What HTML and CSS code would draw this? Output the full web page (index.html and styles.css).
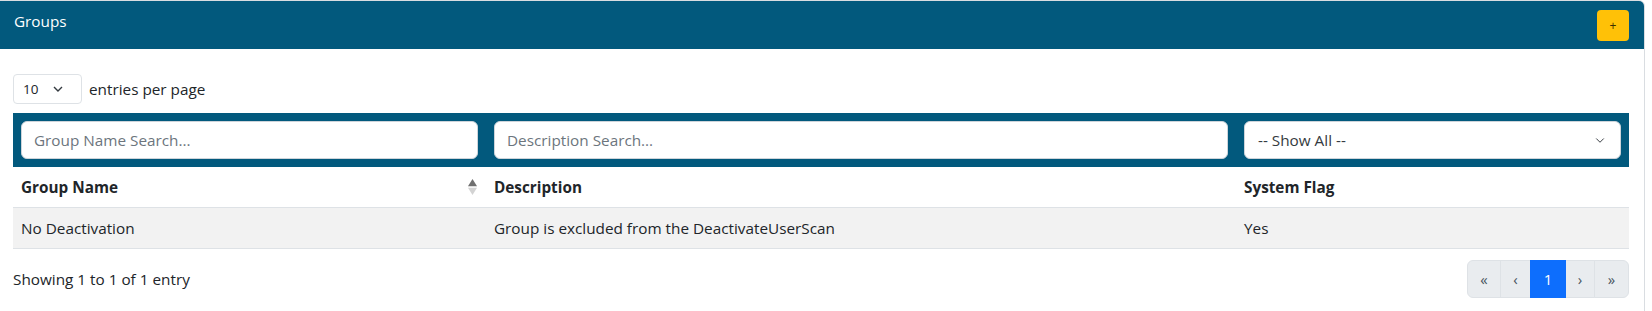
FILE: index.html
```html
<!DOCTYPE html>
<html lang="en">
<head>
<meta charset="utf-8">
<title>Groups</title>
<link rel="stylesheet" href="styles.css">
</head>
<body>
<div class="card">
  <div class="card-header">
    <span class="card-title">Groups</span>
    <button class="btn-add" type="button">+</button>
  </div>
  <div class="card-body">
    <div class="entries">
      <select class="entries-select">
        <option>10</option>
      </select>
      <span class="entries-label">entries per page</span>
    </div>
    <table class="grid">
      <colgroup>
        <col class="c1"><col class="c2"><col class="c3">
      </colgroup>
      <thead>
        <tr class="filter-row">
          <td><input class="filter-input" type="text" placeholder="Group Name Search..."></td>
          <td><input class="filter-input" type="text" placeholder="Description Search..."></td>
          <td><select class="filter-select"><option>-- Show All --</option></select></td>
        </tr>
        <tr class="head-row">
          <th><span class="sort-icon"><svg width="11" height="18" viewBox="0 0 11 18"><path d="M5.5 1 L10 8.3 L1 8.3 Z" fill="#6f6f6f"/><path d="M1 9.7 L10 9.7 L5.5 17 Z" fill="#d3d3d3"/></svg></span>Group Name</th>
          <th>Description</th>
          <th>System Flag</th>
        </tr>
      </thead>
      <tbody>
        <tr class="data-row">
          <td>No Deactivation</td>
          <td>Group is excluded from the DeactivateUserScan</td>
          <td>Yes</td>
        </tr>
      </tbody>
    </table>
    <div class="footer">
      <span class="info">Showing 1 to 1 of 1 entry</span>
      <ul class="pagination">
        <li class="page first"><span class="page-link">&laquo;</span></li>
        <li class="page"><span class="page-link">&lsaquo;</span></li>
        <li class="page active"><span class="page-link">1</span></li>
        <li class="page"><span class="page-link">&rsaquo;</span></li>
        <li class="page last"><span class="page-link">&raquo;</span></li>
      </ul>
    </div>
  </div>
</div>
</body>
</html>
```
FILE: styles.css
```css
* { box-sizing: border-box; }
html, body { margin: 0; padding: 0; background: #fff; }
body {
  font-family: "Open Sans", "Noto Sans", sans-serif;
  font-size: 15.3px;
  color: #212529;
}
.card {
  margin-left: -3px;
  width: 1648px;
  border: 1px solid #d9dde1;
  border-top-right-radius: 6px;
  background: #fff;
  overflow: hidden;
}
.card-header {
  height: 48px;
  background: #02597d;
  padding: 9px 15px 8px 16px;
  display: flex;
  justify-content: space-between;
  align-items: flex-start;
}
.card-title {
  color: #fff;
  font-size: 15.3px;
  line-height: 22px;
}
.btn-add {
  width: 32px;
  height: 31px;
  border: none;
  border-radius: 4px;
  background: #ffc107;
  color: #3a2f00;
  font-family: "Open Sans", sans-serif;
  font-size: 12px;
  line-height: 1;
  padding: 0;
}
.card-body {
  padding: 25px 15px 20px 15px;
}
.entries {
  display: flex;
  align-items: center;
  gap: 7px;
  height: 30px;
  margin-bottom: 9px;
}
.entries-select {
  appearance: none;
  -webkit-appearance: none;
  width: 69px;
  height: 30px;
  border: 1px solid #dee2e6;
  border-radius: 4px;
  padding: 0 0 0 9px;
  font-family: inherit;
  font-size: 13.5px;
  color: #212529;
  background: #fff url("data:image/svg+xml,%3Csvg xmlns='http://www.w3.org/2000/svg' width='10' height='6' viewBox='0 0 10 6'%3E%3Cpath d='M1 1l4 4 4-4' fill='none' stroke='%23343a40' stroke-width='1.4'/%3E%3C/svg%3E") no-repeat right 18px center;
}
.entries-label { font-size: 15.3px; }
.grid {
  width: 1616px;
  border-collapse: collapse;
  table-layout: fixed;
}
.c1 { width: 473px; }
.c2 { width: 750px; }
.c3 { width: 393px; }
.filter-row { background: #02597d; }
.filter-row td { padding: 8px; }
.filter-input, .filter-select {
  display: block;
  width: 100%;
  height: 38px;
  border: 1px solid #ced4da;
  border-radius: 6px;
  padding: 0 12px;
  font-family: inherit;
  font-size: 15.3px;
  color: #212529;
  background: #fff;
}
.filter-input::placeholder { color: #6c757d; opacity: 1; }
.filter-select {
  appearance: none;
  -webkit-appearance: none;
  padding-left: 13px;
  color: #343a40;
  background: #fff url("data:image/svg+xml,%3Csvg xmlns='http://www.w3.org/2000/svg' width='16' height='16' viewBox='0 0 16 16'%3E%3Cpath d='M3 6l5 5 5-5' fill='none' stroke='%23343a40' stroke-width='1.3'/%3E%3C/svg%3E") no-repeat right 12px center / 16px 12px;
}
.head-row th {
  text-align: left;
  font-weight: 700;
  padding: 8px;
  line-height: 24px;
  border-bottom: 1px solid #dee2e6;
}
.sort-icon {
  float: right;
  height: 24px;
  display: flex;
  align-items: center;
  margin-right: 0;
}
.sort-icon svg { display: block; }
.data-row { background: #f2f2f2; }
.data-row td {
  padding: 8px;
  line-height: 24px;
  border-bottom: 1px solid #dee2e6;
}
.footer {
  margin-top: 11px;
  display: flex;
  justify-content: space-between;
  align-items: center;
}
.info { font-size: 15.3px; }
.pagination {
  list-style: none;
  margin: 0;
  padding: 0;
  display: flex;
}
.page + .page { margin-left: -1px; }
.page-link {
  display: flex;
  align-items: center;
  justify-content: center;
  height: 38px;
  border: 1px solid #dee2e6;
  background: #e9ecef;
  color: #4a5560;
  font-size: 15px;
}
.page:nth-child(1) .page-link { width: 34px; }
.page:nth-child(2) .page-link { width: 31px; }
.page:nth-child(3) .page-link { width: 36px; }
.page:nth-child(4) .page-link { width: 30px; }
.page:nth-child(5) .page-link { width: 35px; }
.first .page-link { border-radius: 6px 0 0 6px; }
.last .page-link { border-radius: 0 6px 6px 0; }
.active .page-link {
  background: #0d6efd;
  border-color: #0d6efd;
  color: #fff;
  position: relative;
  z-index: 1;
}
```
